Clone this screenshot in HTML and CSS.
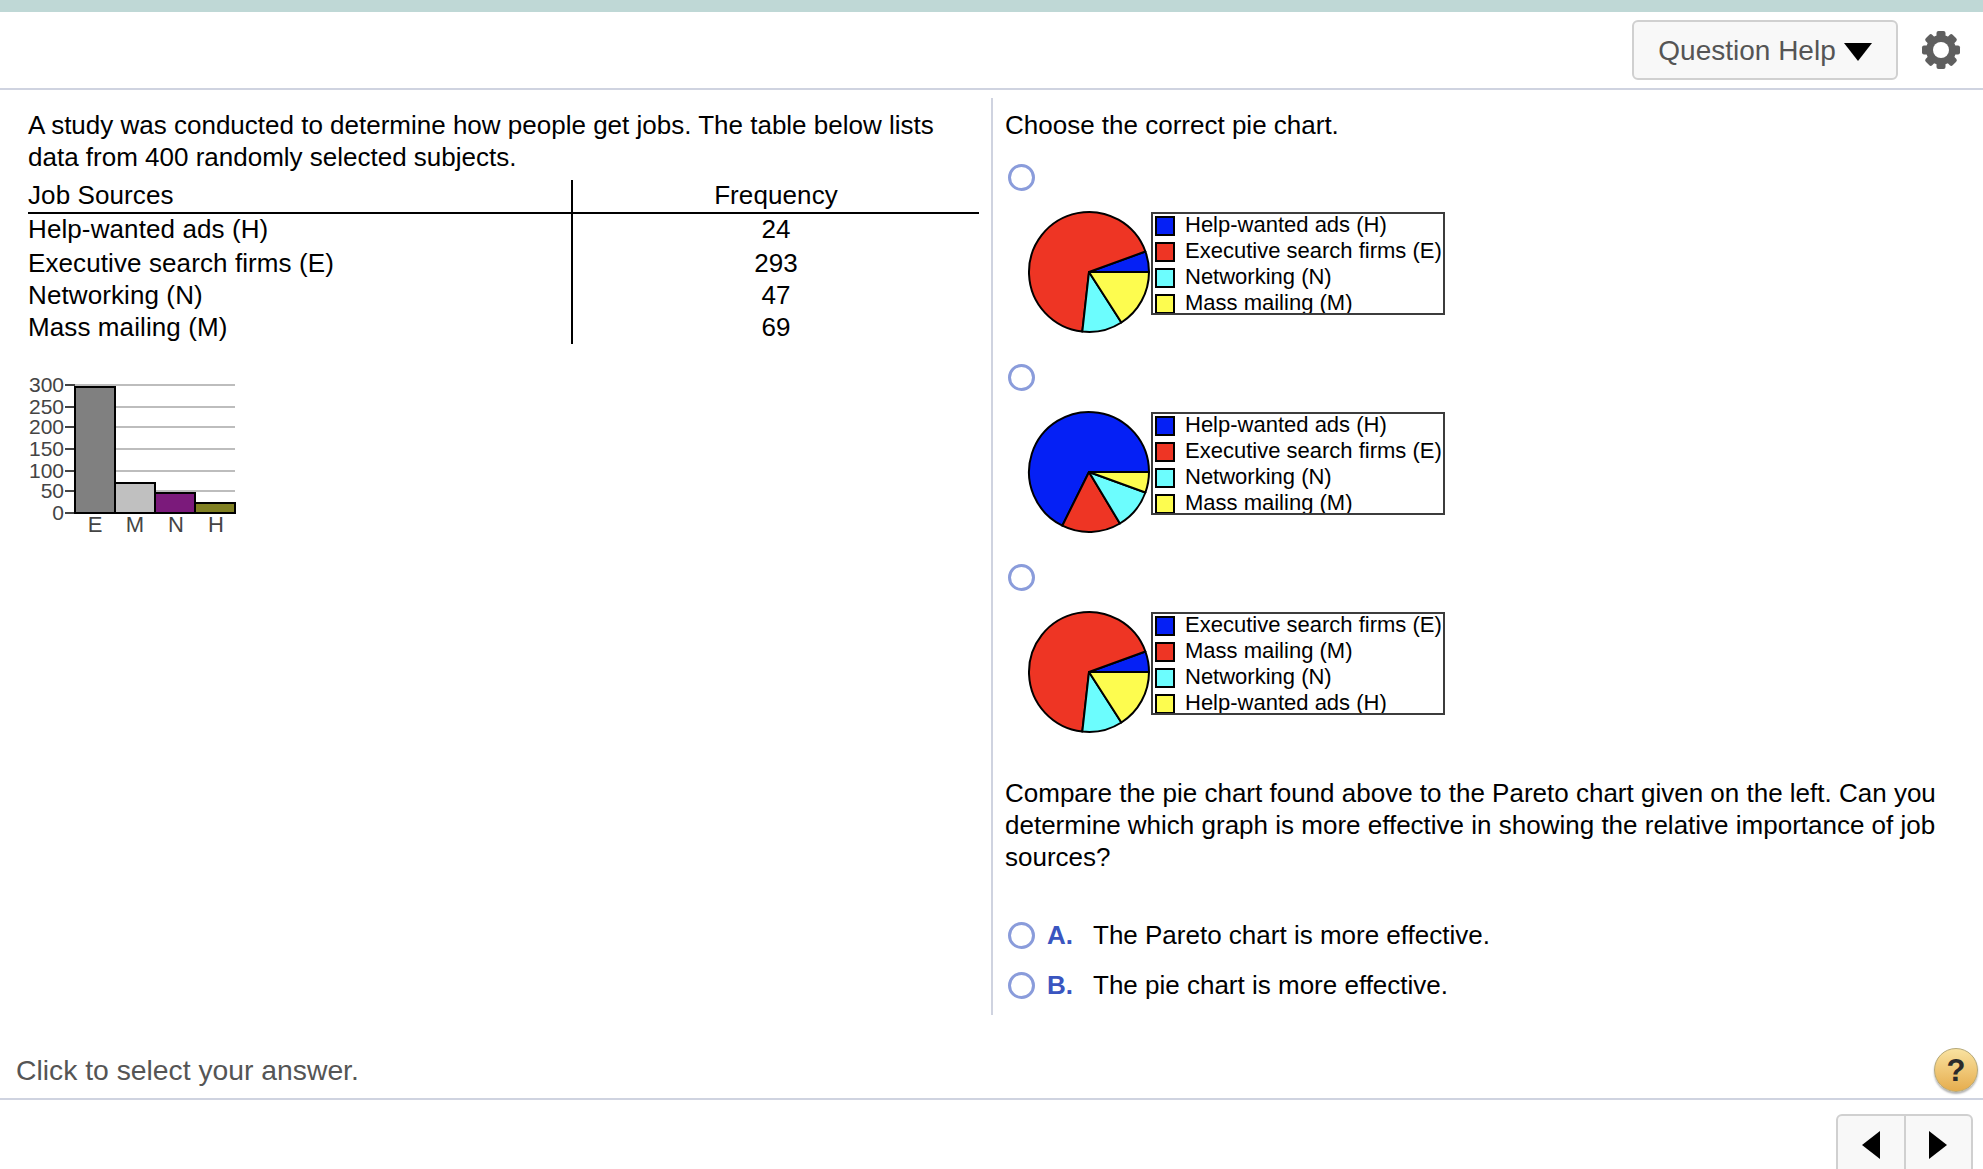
FILE: index.html
```html
<!DOCTYPE html>
<html lang="en">
<head>
  <meta charset="UTF-8" />
  <title>Question</title>
  <link rel="stylesheet" href="styles.css">
</head>
<body>
  <div class="page">
    <div class="top-strip"></div>
    <header class="toolbar">
      <button class="help-btn"><span class="help-label">Question Help</span> <span class="caret"></span></button>
      <svg class="gear" width="40" height="40" viewBox="0 0 40 40">
        <g fill="#5f5f5f">
          <rect x="15.5" y="1" width="9" height="38" rx="2" />
          <rect x="15.5" y="1" width="9" height="38" rx="2" transform="rotate(45 20 20)" />
          <rect x="15.5" y="1" width="9" height="38" rx="2" transform="rotate(90 20 20)" />
          <rect x="15.5" y="1" width="9" height="38" rx="2" transform="rotate(135 20 20)" />
          <circle cx="20" cy="20" r="15" />
        </g>
        <circle cx="20" cy="20" r="8" fill="#fff" />
      </svg>
    </header>

    <main class="content">
      <section class="left-col">
        <p class="text">A study was conducted to determine how people get jobs. The table below lists data from 400 randomly selected subjects.</p>
        <table class="freq-table">
          <tr class="head-row"><td>Job Sources</td><td>Frequency</td></tr>
          <tr><td>Help-wanted ads (H)</td><td>24</td></tr>
          <tr><td>Executive search firms (E)</td><td>293</td></tr>
          <tr><td>Networking (N)</td><td>47</td></tr>
          <tr><td>Mass mailing (M)</td><td>69</td></tr>
        </table>
        <svg class="pareto" width="240" height="180" viewBox="0 360 240 180">
          <g stroke="#bdbdbd" stroke-width="2">
            <line x1="75" y1="385" x2="235" y2="385" />
            <line x1="75" y1="407" x2="235" y2="407" />
            <line x1="75" y1="427" x2="235" y2="427" />
            <line x1="75" y1="449" x2="235" y2="449" />
            <line x1="75" y1="471" x2="235" y2="471" />
            <line x1="75" y1="491" x2="235" y2="491" />
          </g>
          <g stroke="#444" stroke-width="2">
            <line x1="65" y1="385" x2="75" y2="385" />
            <line x1="65" y1="407" x2="75" y2="407" />
            <line x1="65" y1="427" x2="75" y2="427" />
            <line x1="65" y1="449" x2="75" y2="449" />
            <line x1="65" y1="471" x2="75" y2="471" />
            <line x1="65" y1="491" x2="75" y2="491" />
            <line x1="65" y1="513" x2="235" y2="513" />
          </g>
          <g stroke="#000" stroke-width="2">
            <rect x="75" y="387" width="40" height="126" fill="#808080" />
            <rect x="115" y="483" width="40" height="30" fill="#c0c0c0" />
            <rect x="155" y="493" width="40" height="20" fill="#7b1a7b" />
            <rect x="195" y="503" width="40" height="10" fill="#808022" />
          </g>
          <g class="axis-text" text-anchor="end">
            <text x="64" y="392">300</text>
            <text x="64" y="414">250</text>
            <text x="64" y="434">200</text>
            <text x="64" y="456">150</text>
            <text x="64" y="478">100</text>
            <text x="64" y="498">50</text>
            <text x="64" y="520">0</text>
          </g>
          <g class="axis-text cat-labels" text-anchor="middle">
            <text x="95" y="532">E</text>
            <text x="135" y="532">M</text>
            <text x="176" y="532">N</text>
            <text x="216" y="532">H</text>
          </g>
        </svg>
      </section>

      <section class="right-col">
        <p class="text">Choose the correct pie chart.</p>

        <div class="choice">
          <span class="radio"></span>
          <div class="chart-row">
            <svg class="pie" width="124" height="124" viewBox="0 0 124 124">
              <g stroke="#000" stroke-width="2" stroke-linejoin="round">
                <path d="M62 62 L122 62 A60 60 0 0 0 118.4 41.5 Z" fill="#0520f5" />
                <path d="M62 62 L118.4 41.5 A60 60 0 1 0 55.3 121.6 Z" fill="#ee3524" />
                <path d="M62 62 L55.3 121.6 A60 60 0 0 0 94.4 112.5 Z" fill="#6cfdfe" />
                <path d="M62 62 L94.4 112.5 A60 60 0 0 0 122 62 Z" fill="#fdfc4f" />
              </g>
            </svg>
            <div class="legend">
              <div class="legend-row"><span class="swatch blue"></span>Help-wanted ads (H)</div>
              <div class="legend-row"><span class="swatch red"></span>Executive search firms (E)</div>
              <div class="legend-row"><span class="swatch cyan"></span>Networking (N)</div>
              <div class="legend-row"><span class="swatch yellow"></span>Mass mailing (M)</div>
            </div>
          </div>
        </div>

        <div class="choice">
          <span class="radio"></span>
          <div class="chart-row">
            <svg class="pie" width="124" height="124" viewBox="0 0 124 124">
              <g stroke="#000" stroke-width="2" stroke-linejoin="round">
                <path d="M62 62 L122 62 A60 60 0 1 0 35.3 115.7 Z" fill="#0520f5" />
                <path d="M62 62 L35.3 115.7 A60 60 0 0 0 92.9 113.5 Z" fill="#ee3524" />
                <path d="M62 62 L92.9 113.5 A60 60 0 0 0 118.4 82.5 Z" fill="#6cfdfe" />
                <path d="M62 62 L118.4 82.5 A60 60 0 0 0 122 62 Z" fill="#fdfc4f" />
              </g>
            </svg>
            <div class="legend">
              <div class="legend-row"><span class="swatch blue"></span>Help-wanted ads (H)</div>
              <div class="legend-row"><span class="swatch red"></span>Executive search firms (E)</div>
              <div class="legend-row"><span class="swatch cyan"></span>Networking (N)</div>
              <div class="legend-row"><span class="swatch yellow"></span>Mass mailing (M)</div>
            </div>
          </div>
        </div>

        <div class="choice">
          <span class="radio"></span>
          <div class="chart-row">
            <svg class="pie" width="124" height="124" viewBox="0 0 124 124">
              <g stroke="#000" stroke-width="2" stroke-linejoin="round">
                <path d="M62 62 L122 62 A60 60 0 0 0 118.4 41.5 Z" fill="#0520f5" />
                <path d="M62 62 L118.4 41.5 A60 60 0 1 0 55.3 121.6 Z" fill="#ee3524" />
                <path d="M62 62 L55.3 121.6 A60 60 0 0 0 94.4 112.5 Z" fill="#6cfdfe" />
                <path d="M62 62 L94.4 112.5 A60 60 0 0 0 122 62 Z" fill="#fdfc4f" />
              </g>
            </svg>
            <div class="legend">
              <div class="legend-row"><span class="swatch blue"></span>Executive search firms (E)</div>
              <div class="legend-row"><span class="swatch red"></span>Mass mailing (M)</div>
              <div class="legend-row"><span class="swatch cyan"></span>Networking (N)</div>
              <div class="legend-row"><span class="swatch yellow"></span>Help-wanted ads (H)</div>
            </div>
          </div>
        </div>

        <p class="text question">Compare the pie chart found above to the Pareto chart given on the left. Can you determine which graph is more effective in showing the relative importance of job sources?</p>

        <div class="option"><span class="radio"></span><b class="opt-letter">A.</b>The Pareto chart is more effective.</div>
        <div class="option"><span class="radio"></span><b class="opt-letter">B.</b>The pie chart is more effective.</div>
      </section>
    </main>

    <div class="status-bar">
      <span class="status-text">Click to select your answer.</span>
      <span class="help-icon">?</span>
    </div>

    <footer class="nav-bar">
      <div class="nav-group">
        <button class="nav-btn"><span class="arrow-left"></span></button>
        <button class="nav-btn"><span class="arrow-right"></span></button>
      </div>
    </footer>
  </div>
</body>
</html>
```

FILE: styles.css
```css
:root {
  --rule-color: #cfd3e0;
  --radio-color: #8a9cdb;
  --btn-bg: #f8f8f8;
  --btn-border: #d0d0d0;
}
html, body {
  margin: 0;
  height: 100%;
  overflow: hidden;
}
body {
  font-family: 'Liberation Sans', Arial, sans-serif;
  font-size: 26px;
  line-height: 32px;
  color: #000;
  background: #fff;
}
.page {
  display: flex;
  flex-direction: column;
  height: 1169px;
  overflow: hidden;
}
.top-strip {
  flex: none;
  height: 12px;
  background: #bfd8d6;
}
.toolbar {
  flex: none;
  height: 76px;
  border-bottom: 2px solid var(--rule-color);
  display: flex;
  align-items: center;
  justify-content: flex-end;
  gap: 23px;
  padding-right: 22px;
}
.help-btn {
  width: 266px;
  height: 60px;
  background: var(--btn-bg);
  border: 2px solid var(--btn-border);
  border-radius: 6px;
  font-family: inherit;
  font-size: 28px;
  color: #555;
  padding: 0;
  display: flex;
  align-items: center;
  justify-content: center;
  gap: 8px;
}
.help-label {
  padding-top: 2px;
}
.caret {
  border-left: 14px solid transparent;
  border-right: 14px solid transparent;
  border-top: 18px solid #000;
  margin-top: 4px;
}
.content {
  display: flex;
  flex: none;
  height: 917px;
  margin-top: 8px;
}
.left-col {
  width: 991px;
  box-sizing: border-box;
  padding: 11px 12px 0 28px;
}
.right-col {
  flex: 1;
  border-left: 2px solid var(--rule-color);
  padding: 11px 20px 0 12px;
}
.text {
  margin: 0;
}
.freq-table {
  width: 951px;
  margin-top: 7px;
  border-collapse: collapse;
  letter-spacing: 0.1px;
}
.freq-table td {
  padding: 0 0 2px;
  height: 30px;
  line-height: 28px;
}
.freq-table td:first-child {
  width: 543px;
  border-right: 2px solid #000;
}
.freq-table td:last-child {
  text-align: center;
}
.freq-table tr:nth-child(3) td {
  padding-top: 2px;
}
.head-row td {
  border-bottom: 2px solid #000;
}
.pareto {
  display: block;
  margin: 16px 0 0 -28px;
}
.axis-text text {
  font-size: 21px;
  fill: #444;
}
.cat-labels text {
  font-size: 22px;
}
.right-col > .text:first-child {
  margin-bottom: 23px;
}
.choice {
  height: 200px;
}
.radio {
  display: inline-block;
  box-sizing: border-box;
  width: 27px;
  height: 27px;
  border: 3px solid var(--radio-color);
  border-radius: 50%;
  background: #fff;
  flex: none;
}
.choice > .radio {
  display: block;
  margin-left: 3px;
}
.chart-row {
  display: flex;
  align-items: flex-start;
  margin: 19px 0 0 22px;
}
.pie {
  display: block;
}
.legend {
  box-sizing: border-box;
  width: 294px;
  height: 103px;
  margin: 2px 0 0 0;
  border: 2px solid #3c3c3c;
  overflow: hidden;
  font-size: 22px;
}
.legend-row {
  display: flex;
  align-items: center;
  gap: 10px;
  height: 26px;
  line-height: 26px;
  white-space: nowrap;
  padding-left: 2px;
}
.legend-row:first-child {
  margin-top: -2px;
}
.swatch {
  box-sizing: border-box;
  width: 20px;
  height: 20px;
  border: 2px solid #000;
  margin-top: 2px;
  flex: none;
}
.blue { background: #0520f5; }
.red { background: #ee3524; }
.cyan { background: #6cfdfe; }
.yellow { background: #fdfc4f; }
.question {
  margin-top: 13px;
  margin-bottom: 37px;
}
.option {
  display: flex;
  align-items: center;
  height: 50px;
  padding-left: 3px;
}
.opt-letter {
  width: 46px;
  margin-left: 12px;
  color: #3a55c0;
}
.status-bar {
  flex: none;
  height: 58px;
  box-sizing: border-box;
  margin-top: 27px;
  border-bottom: 2px solid var(--rule-color);
  display: flex;
  align-items: center;
  justify-content: space-between;
  padding: 0 5px 0 16px;
}
.status-text {
  font-size: 28.3px;
  color: #555;
}
.help-icon {
  width: 44px;
  height: 44px;
  box-sizing: border-box;
  border: 1px solid #b5a877;
  border-radius: 50%;
  background: linear-gradient(#f9e2a0, #e6ad4e);
  box-shadow: 0 2px 2px rgba(0,0,0,0.3);
  font-size: 31px;
  font-weight: bold;
  line-height: 44px;
  text-align: center;
  color: #2b2b2b;
}
.nav-bar {
  flex: none;
  display: flex;
  justify-content: flex-end;
  padding: 14px 10px 0 0;
}
.nav-group {
  display: flex;
  width: 137px;
  height: 70px;
  box-sizing: border-box;
  background: var(--btn-bg);
  border: 2px solid var(--btn-border);
  border-radius: 6px;
}
.nav-btn {
  flex: 1;
  height: 100%;
  padding: 0 0 8px;
  box-sizing: border-box;
  background: none;
  border: none;
  display: flex;
  align-items: center;
  justify-content: center;
}
.nav-btn + .nav-btn {
  border-left: 2px solid var(--btn-border);
}
.arrow-left {
  border-top: 14px solid transparent;
  border-bottom: 14px solid transparent;
  border-right: 18px solid #000;
}
.arrow-right {
  border-top: 14px solid transparent;
  border-bottom: 14px solid transparent;
  border-left: 18px solid #000;
}
```
